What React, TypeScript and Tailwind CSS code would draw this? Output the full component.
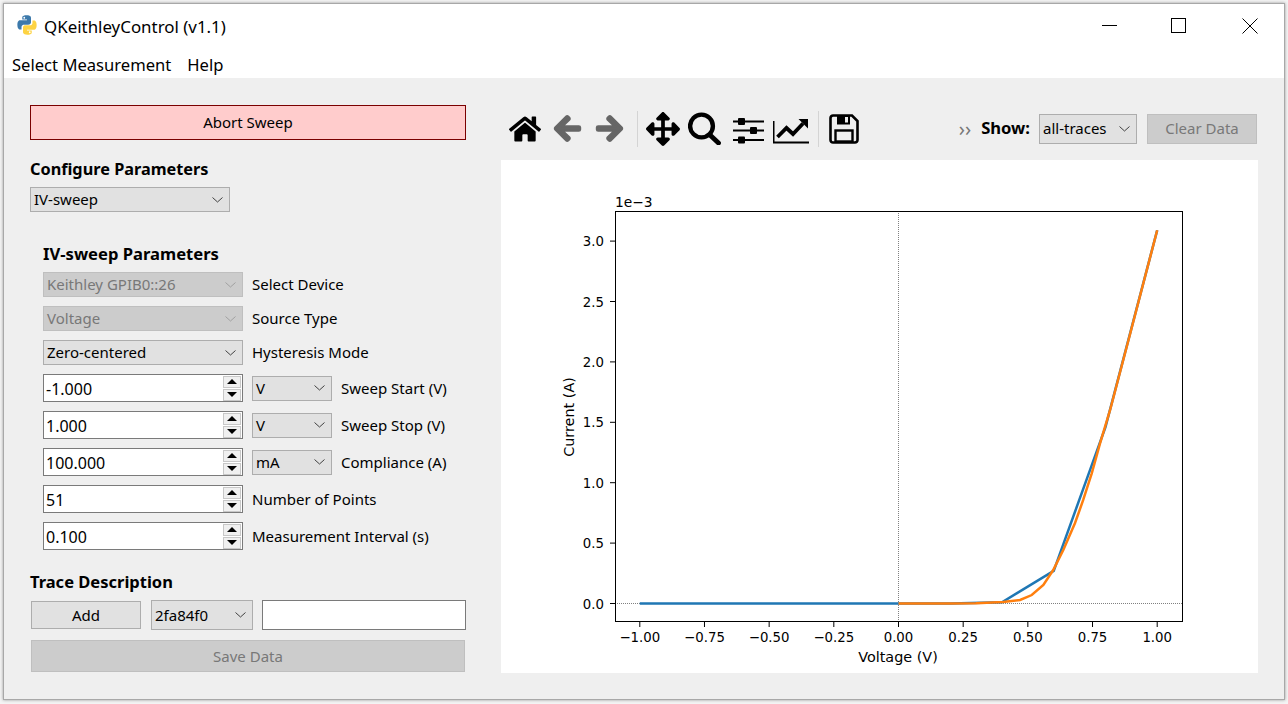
import React from 'react';
import { FaHome, FaArrowLeft, FaArrowRight, FaArrowsAlt } from 'react-icons/fa';

const font = "font-['Noto_Sans','Open_Sans',sans-serif]";

function Chevron({ light }: { light?: boolean }) {
  return (
    <svg width="11" height="6" viewBox="0 0 11 6" className="shrink-0">
      <path d="M0.5 0.5L5.5 5L10.5 0.5" fill="none" stroke={light ? '#a0a0a0' : '#404040'} strokeWidth="1" />
    </svg>
  );
}

function Combo({ value, className, disabled }: { value: string; className: string; disabled?: boolean }) {
  return (
    <div
      className={`flex items-center justify-between border pl-[3px] pr-[6px] text-[15px] ${
        disabled ? 'border-[#bfbfbf] bg-[#cccccc] text-[#787878]' : 'border-[#adadad] bg-[#e1e1e1] text-black'
      } ${className}`}
    >
      <span className="leading-none">{value}</span>
      <Chevron light={disabled} />
    </div>
  );
}

function Spin({ value }: { value: string }) {
  return (
    <div className="flex h-[28px] w-[200px] items-center justify-between border border-[#7a7a7a] bg-white pl-[2px] pr-[1px] text-[16px]">
      <span className="pt-[2px] leading-none">{value}</span>
      <div className="flex flex-col gap-px">
        <div className="flex h-[12px] w-[18px] items-center justify-center border border-[#c8c8c8] bg-[#f0f0f0]">
          <div className="h-0 w-0 border-x-[5px] border-b-[5px] border-x-transparent border-b-black" />
        </div>
        <div className="flex h-[12px] w-[18px] items-center justify-center border border-[#c8c8c8] bg-[#f0f0f0]">
          <div className="h-0 w-0 border-x-[5px] border-t-[5px] border-x-transparent border-t-black" />
        </div>
      </div>
    </div>
  );
}

function Label({ text }: { text: string }) {
  return <span className="whitespace-nowrap text-[15px] leading-none">{text}</span>;
}

function SpinRow({ value, unit, label }: { value: string; unit?: string; label: string }) {
  return (
    <div className="flex h-[28px] items-center gap-[9px]">
      <Spin value={value} />
      {unit && <Combo value={unit} className="h-[25px] w-[80px]" />}
      <Label text={label} />
    </div>
  );
}

function ComboRow({ value, label, disabled }: { value: string; label: string; disabled?: boolean }) {
  return (
    <div className="flex h-[25px] items-center gap-[9px]">
      <Combo value={value} disabled={disabled} className="h-[25px] w-[200px]" />
      <Label text={label} />
    </div>
  );
}

function PythonLogo() {
  return (
    <svg width="20" height="20" viewBox="0 0 110 110" className="mb-[4px]">
      <path
        fill="#3c79ab"
        d="M54 2C28 2 29 13 29 13v12h26v4H18S2 27 2 54s14 26 14 26h9V67s-1-14 14-14h25s13 0 13-13V16S79 2 54 2zM40 10a5 5 0 1 1 0 10 5 5 0 0 1 0-10z"
      />
      <path
        fill="#fdd343"
        d="M56 108c26 0 25-11 25-11V85H55v-4h37s16 2 16-25-14-26-14-26h-9v13s1 14-14 14H46s-13 0-13 13v24s-2 14 23 14zm14-8a5 5 0 1 1 0-10 5 5 0 0 1 0 10z"
      />
    </svg>
  );
}

function SearchIcon() {
  return (
    <svg width="33" height="33" viewBox="0 0 33 33" className="ml-[8px]">
      <circle cx="13.5" cy="14" r="11.4" fill="none" stroke="#000" strokeWidth="4.4" />
      <path d="M22 23L30.5 31" stroke="#000" strokeWidth="4.8" strokeLinecap="round" />
    </svg>
  );
}

function SlidersIcon() {
  return (
    <svg width="31" height="27" viewBox="0 0 31 27" className="ml-[12px] mt-[3px]">
      <path d="M0 4.5H31M0 13.5H31M0 23H31" stroke="#000" strokeWidth="2" />
      <rect x="5" y="1" width="7" height="7" rx="1" fill="#000" />
      <rect x="17" y="10" width="7" height="7" rx="1" fill="#000" />
      <rect x="5" y="19.5" width="7" height="7" rx="1" fill="#000" />
    </svg>
  );
}

function LinesIcon() {
  return (
    <svg width="36" height="28" viewBox="0 0 36 28" className="ml-[9px] mt-[2px]">
      <path d="M0.5 5V26.5H36" fill="none" stroke="#000" strokeWidth="2" />
      <path d="M4.5 21L13.5 12L20 18L30 7.5" fill="none" stroke="#000" strokeWidth="3.8" />
      <path d="M25.5 3H35V12.5Z" fill="#000" />
    </svg>
  );
}

function SaveIcon() {
  return (
    <svg width="30" height="30" viewBox="0 0 30 30" className="ml-[10px]">
      <path
        d="M4 1.5H23L28.5 7V26A2.5 2.5 0 0 1 26 28.5H4A2.5 2.5 0 0 1 1.5 26V4A2.5 2.5 0 0 1 4 1.5Z"
        fill="none"
        stroke="#000"
        strokeWidth="2.6"
      />
      <path d="M8 1H21V10.5H8Z" fill="#000" />
      <rect x="16" y="3" width="3" height="5.5" fill="#efefef" />
      <rect x="6.5" y="16.5" width="17" height="11" fill="none" stroke="#000" strokeWidth="2.4" />
    </svg>
  );
}

const toX = (v: number) => 898.5 + v * 258.7;
const toY = (a: number) => 603.5 - a * 120.8;

const sweepBlue: [number, number][] = [
  [-1, 0], [0, 0], [0.2, 0], [0.4, 0.01], [0.6, 0.27], [0.8, 1.46], [1, 3.09],
];
const sweepOrange: [number, number][] = [
  [0, 0], [0.2, 0], [0.3, 0.002], [0.404, 0.012], [0.47, 0.029], [0.515, 0.07], [0.56, 0.153],
  [0.598, 0.277], [0.637, 0.443], [0.682, 0.664], [0.714, 0.857], [0.747, 1.078], [0.779, 1.326],
  [0.818, 1.602], [0.9, 2.27], [1, 3.09],
];
const pts = (list: [number, number][]) => list.map(([v, a]) => `${toX(v)},${toY(a)}`).join(' ');

function Chart() {
  const xTicks = [-1, -0.75, -0.5, -0.25, 0, 0.25, 0.5, 0.75, 1];
  const yTicks = [0, 0.5, 1, 1.5, 2, 2.5, 3];
  return (
    <div className="mt-[9px] h-[513px] w-[757px] bg-white">
      <svg width="757" height="513" viewBox="501 160 757 513" className="font-['DejaVu_Sans',sans-serif]" fontSize="13.3" fill="#000">
        <line x1="615" x2="1183" y1="603.5" y2="603.5" stroke="#808080" strokeWidth="1" strokeDasharray="1 1" />
        <line x1="898.5" x2="898.5" y1="211" y2="622" stroke="#808080" strokeWidth="1" strokeDasharray="1 1" />
        <polyline points={pts(sweepBlue)} fill="none" stroke="#1f77b4" strokeWidth="2.5" />
        <polyline points={pts(sweepOrange)} fill="none" stroke="#ff7f0e" strokeWidth="2.5" />
        <rect x="615.5" y="211.5" width="567" height="410" fill="none" stroke="#000" strokeWidth="1" />
        {xTicks.map((t) => (
          <g key={t}>
            <line x1={toX(t)} x2={toX(t)} y1="622" y2="627" stroke="#000" />
            <text x={toX(t)} y="642" textAnchor="middle">
              {(t < 0 ? '\u2212' : '') + Math.abs(t).toFixed(2)}
            </text>
          </g>
        ))}
        {yTicks.map((t) => (
          <g key={t}>
            <line x1="610" x2="615" y1={toY(t)} y2={toY(t)} stroke="#000" />
            <text x="604" y={toY(t) + 5} textAnchor="end">
              {t.toFixed(1)}
            </text>
          </g>
        ))}
        <text x="615" y="207" fontSize="13.8">1e{'\u2212'}3</text>
        <text x="898" y="662" textAnchor="middle" fontSize="14.4">Voltage (V)</text>
        <text x="574" y="417" textAnchor="middle" fontSize="14.4" transform="rotate(-90 574 417)">Current (A)</text>
      </svg>
    </div>
  );
}

export default function App() {
  return (
    <div className={`h-[704px] w-[1288px] overflow-hidden bg-[#f4f4f4] pt-[3px] pr-[3px] pb-[4px] pl-[3px] text-black ${font}`}>
      <div className="flex h-[697px] flex-col border border-[#a8a8a8] bg-[#efefef] shadow-[0_0_3px_#999]">
        {/* title + menu */}
        <div className="flex h-[46px] items-center justify-between bg-white pl-[13px]">
          <div className="flex items-center gap-[7px]">
            <PythonLogo />
            <span className="text-[16.9px] leading-none">QKeithleyControl (v1.1)</span>
          </div>
          <div className="mb-[3px] flex items-center pr-[26px]">
            <div className="mr-[54px] h-px w-[15px] bg-black" />
            <div className="mr-[56px] h-[15px] w-[15px] border border-black" />
            <svg width="16" height="16" viewBox="0 0 16 16">
              <path d="M0.5 0.5L15.5 15.5M15.5 0.5L0.5 15.5" stroke="#000" strokeWidth="1" />
            </svg>
          </div>
        </div>
        <div className="flex h-[28px] items-center gap-[16px] bg-white pl-[8px] pt-[2px] text-[16.6px] leading-none">
          <span>Select Measurement</span>
          <span>Help</span>
        </div>

        <div className="flex flex-1">
          {/* left column */}
          <div className="flex w-[497px] flex-col pl-[26px] pt-[27px]">
            <div className="flex h-[35px] w-[436px] items-center justify-center border border-[#7a0000] bg-[#ffcccc] text-[15px]">
              Abort Sweep
            </div>
            <div className="mt-[19px] text-[16.3px] leading-[20px] font-bold">Configure Parameters</div>
            <Combo value="IV-sweep" className="mt-[8px] h-[25px] w-[200px]" />
            <div className="mt-[32px] ml-[13px] flex flex-col">
              <div className="text-[16.6px] leading-[20px] font-bold">IV-sweep Parameters</div>
              <div className="mt-[8px] flex flex-col gap-[9px]">
                <ComboRow value="Keithley GPIB0::26" label="Select Device" disabled />
                <ComboRow value="Voltage" label="Source Type" disabled />
                <ComboRow value="Zero-centered" label="Hysteresis Mode" />
              </div>
              <div className="mt-[9px] flex flex-col gap-[9px]">
                <SpinRow value="-1.000" unit="V" label="Sweep Start (V)" />
                <SpinRow value="1.000" unit="V" label="Sweep Stop (V)" />
                <SpinRow value="100.000" unit="mA" label="Compliance (A)" />
                <SpinRow value="51" label="Number of Points" />
                <SpinRow value="0.100" label="Measurement Interval (s)" />
              </div>
            </div>
            <div className="mt-[22px] text-[16.5px] leading-[20px] font-bold">Trace Description</div>
            <div className="mt-[8px] flex w-[436px] items-center">
              <div className="ml-px flex h-[28px] w-[110px] items-center justify-center border border-[#adadad] bg-[#e1e1e1] text-[15px]">
                Add
              </div>
              <Combo value="2fa84f0" className="ml-[10px] h-[30px] w-[102px]" />
              <div className="ml-[9px] h-[30px] flex-1 border border-[#7a7a7a] bg-white" />
            </div>
            <div className="mt-[10px] ml-px flex h-[32px] w-[434px] items-center justify-center border border-[#bfbfbf] bg-[#cccccc] text-[15px] text-[#787878]">
              Save Data
            </div>
          </div>

          {/* right column */}
          <div className="flex flex-1 flex-col">
            <div className="mt-[28px] flex h-[45px] items-center pl-[8px]">
              <FaHome size={32} />
              <FaArrowLeft size={29} stroke="currentColor" strokeWidth={36} className="ml-[12px] text-[#666666]" />
              <FaArrowRight size={29} stroke="currentColor" strokeWidth={36} className="ml-[13px] text-[#666666]" />
              <div className="ml-[13px] h-[36px] w-px bg-[#d4d4d4]" />
              <FaArrowsAlt size={34} className="ml-[8px]" />
              <SearchIcon />
              <SlidersIcon />
              <LinesIcon />
              <div className="ml-[9px] h-[36px] w-px bg-[#d4d4d4]" />
              <SaveIcon />
              <div className="flex-1" />
              <span className="text-[20px] leading-none text-[#777777]">››</span>
              <span className="ml-[10px] text-[16.6px] leading-none font-bold">Show:</span>
              <Combo value="all-traces" className="ml-[9px] h-[30px] w-[98px]" />
              <div className="mr-[27px] ml-[10px] flex h-[30px] w-[110px] items-center justify-center border border-[#bfbfbf] bg-[#cccccc] text-[15px] text-[#787878]">
                Clear Data
              </div>
            </div>
            <Chart />
          </div>
        </div>
      </div>
    </div>
  );
}
